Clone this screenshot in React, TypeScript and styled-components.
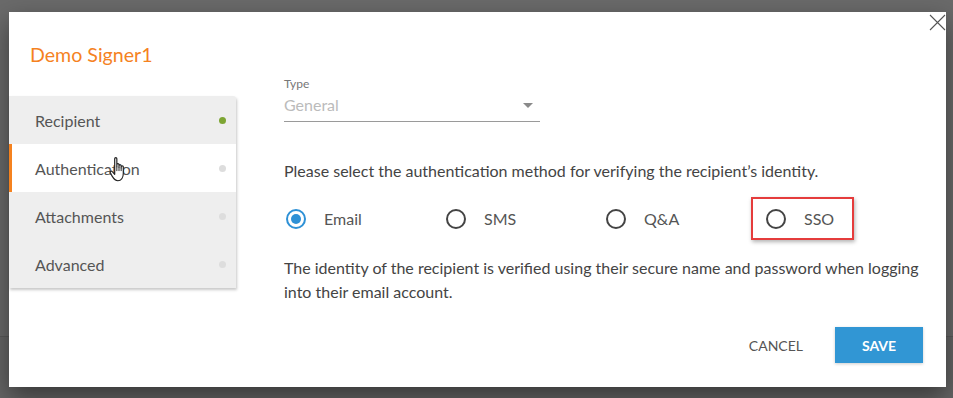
import React, { useState } from "react";
import styled, { createGlobalStyle } from "styled-components";

const GlobalStyle = createGlobalStyle`
  html, body {
    margin: 0;
    padding: 0;
    height: 100%;
  }
  body {
    background: linear-gradient(
      to bottom,
      #6a6a6a 0px,
      #6a6a6a 336px,
      #5a5a5a 336px,
      #5a5a5a 337px,
      #656565 337px,
      #656565 100%
    );
    font-family: Lato, "Open Sans", Arial, sans-serif;
  }
`;

const Page = styled.div`
  width: 953px;
  height: 398px;
  box-sizing: border-box;
  padding: 12px 7px 11px 9px;
`;

const Dialog = styled.div`
  position: relative;
  width: 937px;
  height: 375px;
  background: #ffffff;
  box-shadow: 0 10px 24px rgba(0, 0, 0, 0.45);
  display: flex;
  flex-direction: column;
`;

const CloseButton = styled.button`
  position: absolute;
  top: 1px;
  right: 0px;
  width: 18px;
  height: 18px;
  padding: 0;
  border: none;
  background: transparent;
  cursor: pointer;
  display: flex;
  align-items: center;
  justify-content: center;
`;

const Title = styled.h2`
  margin: 0;
  padding: 31px 0 0 21px;
  font-size: 19.6px;
  line-height: 23px;
  font-weight: 400;
  color: #f5821f;
`;

const Body = styled.div`
  display: flex;
  align-items: flex-start;
  margin-top: 11px;
`;

const Nav = styled.nav`
  flex-shrink: 0;
  width: 227px;
  margin-top: 19px;
  background: #eeeeee;
  border-top-right-radius: 3px;
  box-shadow: 1px 2px 3px rgba(0, 0, 0, 0.22);
  display: flex;
  flex-direction: column;
`;

const NavItem = styled.div<{ $active?: boolean }>`
  position: relative;
  height: 48px;
  display: flex;
  align-items: center;
  justify-content: space-between;
  padding: 0 10px 0 23px;
  box-sizing: border-box;
  font-size: 16px;
  color: #555555;
  background: ${(p) => (p.$active ? "#ffffff" : "transparent")};
  border-left: 3px solid ${(p) => (p.$active ? "#f5821f" : "transparent")};
  cursor: pointer;
`;

const Dot = styled.span<{ $done?: boolean }>`
  width: 7px;
  height: 7px;
  border-radius: 50%;
  background: ${(p) => (p.$done ? "#7da533" : "#dddddd")};
`;

const Pointer = styled.svg`
  position: absolute;
  left: 97px;
  top: 12px;
  pointer-events: none;
`;

const Content = styled.div`
  flex: 1;
  margin-left: 48px;
  padding-right: 20px;
  color: #444444;
`;

const FieldLabel = styled.div`
  font-size: 12px;
  line-height: 13px;
  color: #777777;
`;

const Select = styled.div`
  width: 256px;
  margin-top: 5px;
  padding-bottom: 6px;
  border-bottom: 1px solid #9a9a9a;
  display: flex;
  align-items: center;
  justify-content: space-between;
  font-size: 16px;
  line-height: 20px;
  color: #bbbbbb;
`;

const Caret = styled.span`
  width: 0;
  height: 0;
  margin-right: 7px;
  border-left: 5px solid transparent;
  border-right: 5px solid transparent;
  border-top: 5px solid #8a8a8a;
`;

const Prompt = styled.p`
  margin: 39px 0 0;
  font-size: 16px;
  line-height: 20px;
`;

const RadioRow = styled.div`
  display: flex;
  margin-top: 16px;
`;

const RadioOption = styled.label<{ $highlight?: boolean }>`
  position: relative;
  width: 160px;
  height: 43px;
  padding-left: 2px;
  box-sizing: border-box;
  display: flex;
  align-items: center;
  font-size: 16px;
  color: #555555;
  cursor: pointer;

  &::after {
    content: "";
    display: ${(p) => (p.$highlight ? "block" : "none")};
    position: absolute;
    left: -13px;
    top: 0;
    width: 99px;
    height: 39px;
    border: 2px solid #e53c3c;
    box-shadow: 1px 2px 4px rgba(0, 0, 0, 0.3);
    pointer-events: none;
  }
`;

const RadioCircle = styled.span<{ $checked?: boolean }>`
  width: 20px;
  height: 20px;
  box-sizing: border-box;
  border-radius: 50%;
  border: 2px solid ${(p) => (p.$checked ? "#2e91d6" : "#444444")};
  display: flex;
  align-items: center;
  justify-content: center;

  &::before {
    content: "";
    display: ${(p) => (p.$checked ? "block" : "none")};
    width: 10px;
    height: 10px;
    border-radius: 50%;
    background: #2e91d6;
  }
`;

const RadioText = styled.span`
  margin-left: 18px;
`;

const Description = styled.p`
  margin: 16px 0 0;
  font-size: 16px;
  line-height: 24px;
  color: #444444;
`;

const Footer = styled.div`
  display: flex;
  justify-content: flex-end;
  align-items: center;
  gap: 16px;
  padding: 0 23px 0 0;
  margin-top: auto;
  margin-bottom: 24px;
`;

const TextButton = styled.button`
  height: 36px;
  padding: 0 16px;
  border: none;
  background: transparent;
  font-family: inherit;
  font-size: 14px;
  color: #555555;
  cursor: pointer;
`;

const PrimaryButton = styled.button`
  width: 88px;
  height: 36px;
  border: none;
  background: #3196d4;
  color: #ffffff;
  font-family: inherit;
  font-size: 14px;
  font-weight: 700;
  box-shadow: 0 1px 3px rgba(0, 0, 0, 0.2);
  cursor: pointer;
`;

const steps = [
  { name: "Recipient", done: true },
  { name: "Authentication", done: false },
  { name: "Attachments", done: false },
  { name: "Advanced", done: false },
];

const methods = ["Email", "SMS", "Q&A", "SSO"];

export default function App() {
  const [method, setMethod] = useState("Email");

  return (
    <>
      <GlobalStyle />
      <Page>
        <Dialog>
          <CloseButton aria-label="Close">
            <svg width="17" height="17" viewBox="0 0 17 17">
              <path d="M1 1 L16 16 M16 1 L1 16" stroke="#555" strokeWidth="1.1" />
            </svg>
          </CloseButton>
          <Title>Demo Signer1</Title>
          <Body>
            <Nav>
              {steps.map((s) => (
                <NavItem key={s.name} $active={s.name === "Authentication"}>
                  {s.name}
                  <Dot $done={s.done} />
                  {s.name === "Authentication" && (
                    <Pointer width="20" height="28" viewBox="0 0 18 26">
                      <path
                        d="M5 2.5 C5 1.2 7 1.2 7 2.5 L7 10 L7 8 C7 6.8 9 6.8 9 8 L9 10.5 L9 9 C9 7.8 11 7.8 11 9 L11 11 L11 10 C11 8.8 13 8.8 13 10 L13 16 C13 20 11 23 8 23 C5 23 4 21 2.5 18.5 L1 15.5 C0.5 14.3 2 13.5 2.8 14.5 L5 17 Z"
                        fill="#ffffff"
                        stroke="#222222"
                        strokeWidth="1.1"
                        strokeLinejoin="round"
                      />
                      <path d="M7 10 L7 14 M9 10.5 L9 14 M11 11 L11 14" stroke="#222" strokeWidth="0.9" />
                    </Pointer>
                  )}
                </NavItem>
              ))}
            </Nav>
            <Content>
              <FieldLabel>Type</FieldLabel>
              <Select>
                General
                <Caret />
              </Select>
              <Prompt>
                Please select the authentication method for verifying the recipient’s identity.
              </Prompt>
              <RadioRow>
                {methods.map((m) => (
                  <RadioOption
                    key={m}
                    $highlight={m === "SSO"}
                    onClick={() => setMethod(m)}
                  >
                    <RadioCircle $checked={method === m} />
                    <RadioText>{m}</RadioText>
                  </RadioOption>
                ))}
              </RadioRow>
              <Description>
                The identity of the recipient is verified using their secure name and password
                when logging into their email account.
              </Description>
            </Content>
          </Body>
          <Footer>
            <TextButton>CANCEL</TextButton>
            <PrimaryButton>SAVE</PrimaryButton>
          </Footer>
        </Dialog>
      </Page>
    </>
  );
}
